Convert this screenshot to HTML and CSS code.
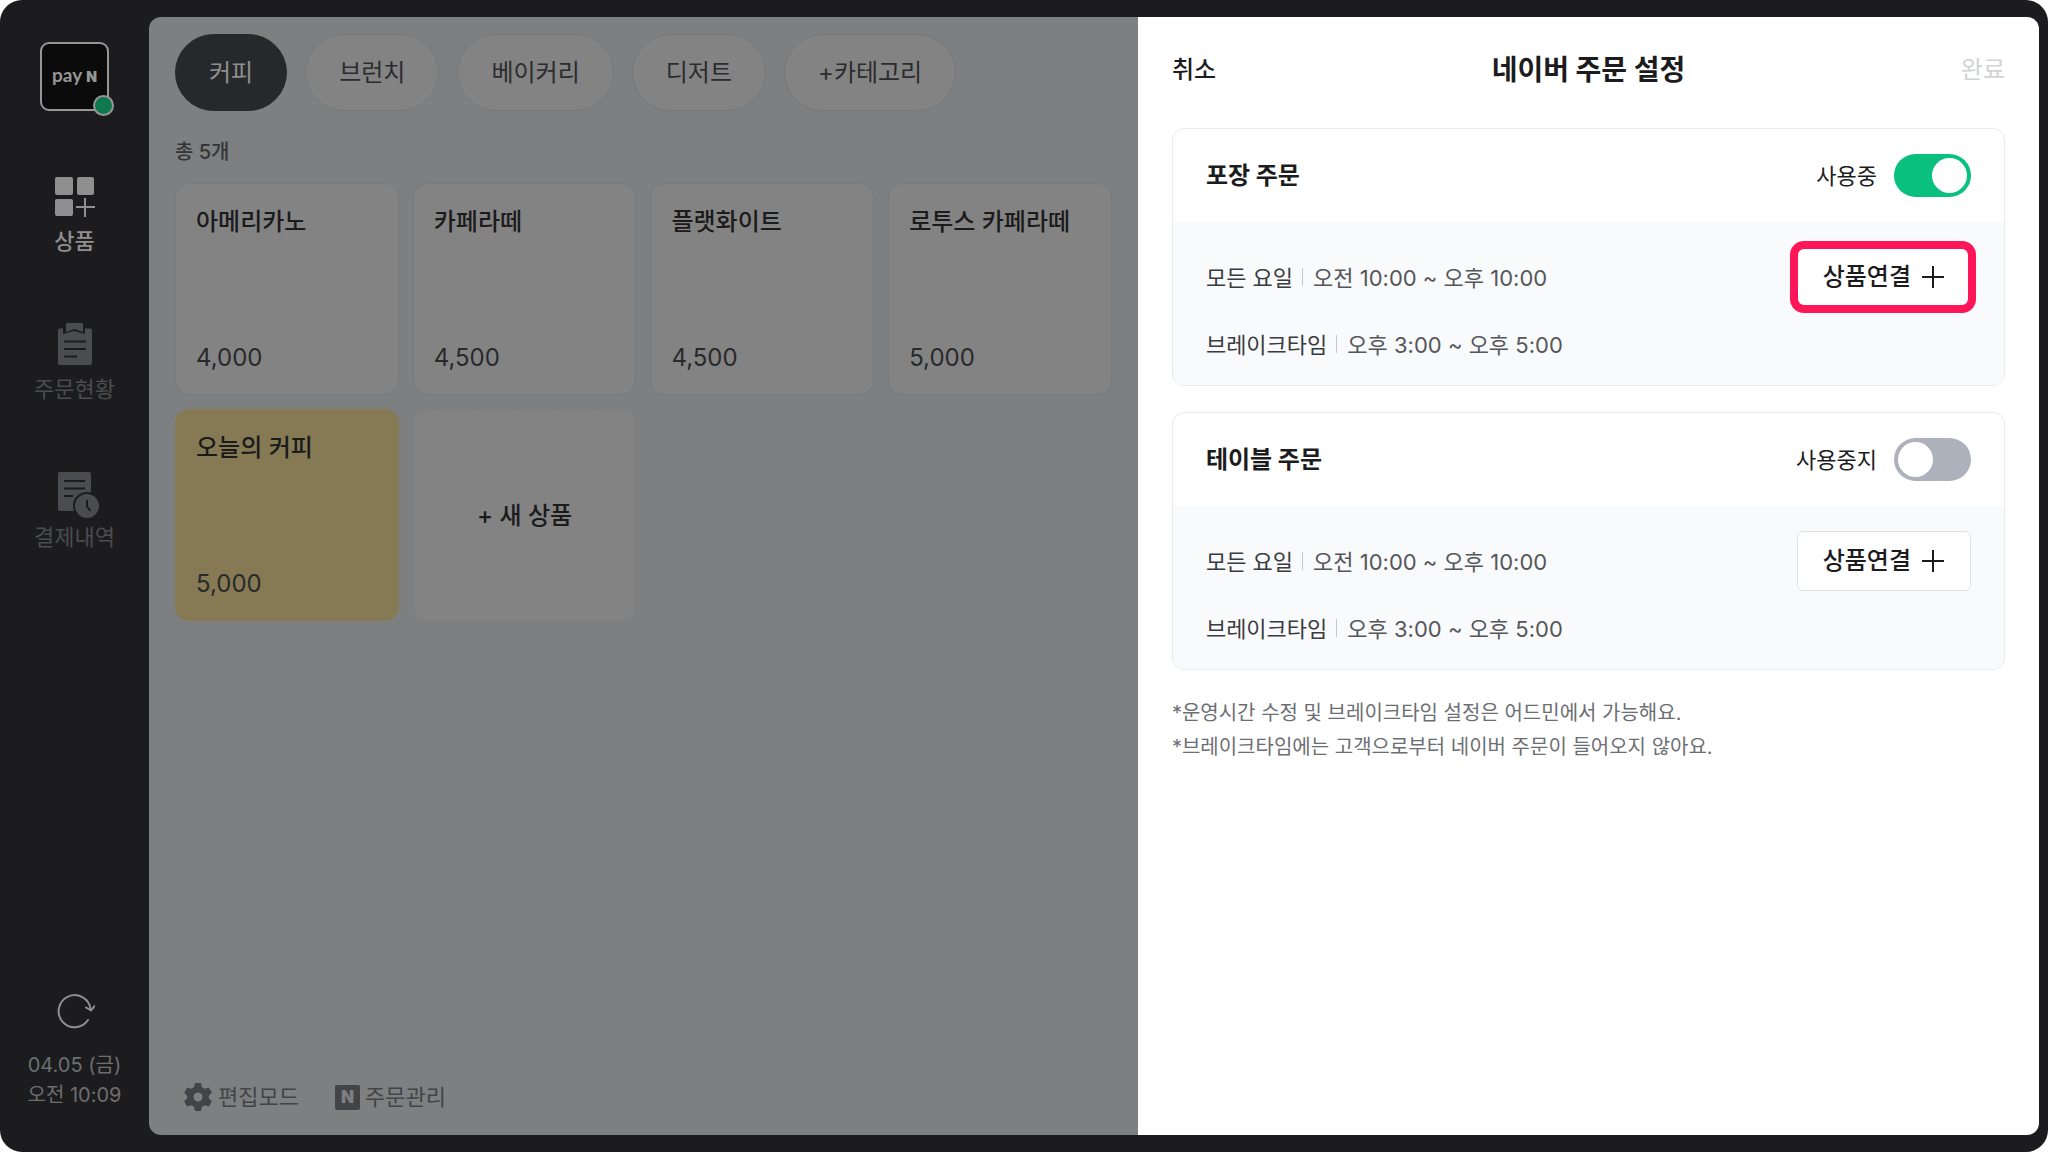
FILE: index.html
```html
<!DOCTYPE html>
<html lang="ko">
<head>
  <meta charset="UTF-8">
  <title>네이버 주문 설정</title>
  <link rel="stylesheet" href="styles.css">
</head>
<body>
  <div class="device">
    <aside class="sidebar">
      <div class="logo">
        <span class="logo-pay">pay</span><span class="logo-n">N</span>
        <span class="logo-status"></span>
      </div>

      <nav class="menu">
        <a class="menu-item active" href="#">
          <svg width="44" height="44" viewBox="0 0 44 44">
            <g fill="currentColor">
              <rect x="2" y="2" width="18" height="18" rx="2"/>
              <rect x="24" y="2" width="17" height="18" rx="2"/>
              <rect x="2" y="24" width="18" height="17" rx="2"/>
            </g>
            <path d="M32 23v19M23 32h19" stroke="currentColor" stroke-width="2"/>
          </svg>
          상품
        </a>
        <a class="menu-item" href="#">
          <svg width="44" height="44" viewBox="0 0 44 44">
            <path fill="currentColor" d="M7 5.500h3v5.500l11-3 11 3V5.500h5a2 2 0 0 1 2 2V40a2 2 0 0 1-2 2H7a2 2 0 0 1-2-2V7.500a2 2 0 0 1 2-2z"/>
            <path fill="currentColor" d="M13 1a1 1 0 0 1 1-1h15a1 1 0 0 1 1 1v8l-8.500-3L13 9z"/>
            <path d="M11 18.500h22M11 26h22M11 33.500h13" stroke="#1c1c1e" stroke-width="2"/>
          </svg>
          주문현황
        </a>
        <a class="menu-item" href="#">
          <svg width="44" height="48" viewBox="0 0 44 48" class="icon-history">
            <rect x="5" y="1" width="33" height="39" rx="2" fill="currentColor"/>
            <path d="M11 10h21M11 17.500h21M11 25h9" stroke="#1c1c1e" stroke-width="2"/>
            <circle cx="34" cy="35" r="13" fill="currentColor" stroke="#1c1c1e" stroke-width="2"/>
            <path d="M34 29v6.500l3.500 4.500" fill="none" stroke="#1c1c1e" stroke-width="2"/>
          </svg>
          결제내역
        </a>
      </nav>

      <button type="button" class="refresh" aria-label="새로고침">
        <svg width="40" height="40" viewBox="0 0 40 40" fill="none" stroke="currentColor" stroke-width="2" stroke-linecap="round">
          <path d="M33 30A16 16 0 1 1 35.500 19"/>
          <path d="M31 17.500l5 3 3.500-4.500"/>
        </svg>
      </button>
      <p class="clock">04.05 (금)<br>오전 10:09</p>
    </aside>

    <main class="products">
      <div class="tabs">
        <button type="button" class="tab active">커피</button>
        <button type="button" class="tab">브런치</button>
        <button type="button" class="tab">베이커리</button>
        <button type="button" class="tab">디저트</button>
        <button type="button" class="tab">+카테고리</button>
      </div>

      <p class="count">총 5개</p>

      <div class="product-grid">
        <button type="button" class="product"><span class="name">아메리카노</span><span class="price">4,000</span></button>
        <button type="button" class="product"><span class="name">카페라떼</span><span class="price">4,500</span></button>
        <button type="button" class="product"><span class="name">플랫화이트</span><span class="price">4,500</span></button>
        <button type="button" class="product"><span class="name">로투스 카페라떼</span><span class="price">5,000</span></button>
        <button type="button" class="product yellow"><span class="name">오늘의 커피</span><span class="price">5,000</span></button>
        <button type="button" class="product add">+ 새 상품</button>
      </div>

      <div class="tools">
        <button type="button" class="tool">
          <svg width="30" height="30" viewBox="0 0 30 30">
            <path fill="currentColor" fill-rule="evenodd" d="M12 1h6l1 4.200 2.800 1.600 4.100-1.200 3 5.200-3.100 2.900v2.600l3.100 2.900-3 5.200-4.100-1.200-2.800 1.600L18 29h-6l-1-4.200-2.800-1.600-4.100 1.200-3-5.200 3.100-2.900v-2.600l-3.100-2.900 3-5.200 4.100 1.200L11 5.200zM15 10.500a4.500 4.500 0 1 0 0 9 4.500 4.500 0 0 0 0-9z"/>
          </svg>
          편집모드
        </button>
        <button type="button" class="tool">
          <span class="naver-mark">N</span>
          주문관리
        </button>
      </div>
    </main>

    <section class="panel">
      <header class="panel-header">
        <button type="button" class="cancel">취소</button>
        <h1>네이버 주문 설정</h1>
        <button type="button" class="done" disabled>완료</button>
      </header>

      <div class="order-card">
        <div class="order-head">
          <h2>포장 주문</h2>
          <label for="takeout">사용중</label>
          <input type="checkbox" class="switch" id="takeout" checked>
        </div>
        <div class="order-body">
          <ul class="hours">
            <li><span class="day">모든 요일</span><span class="time">오전 10:00 ~ 오후 10:00</span></li>
            <li><span class="day">브레이크타임</span><span class="time">오후 3:00 ~ 오후 5:00</span></li>
          </ul>
          <button type="button" class="connect highlight">
            상품연결
            <svg width="22" height="22" viewBox="0 0 22 22"><path d="M11 0v22M0 11h22" stroke="currentColor" stroke-width="2"/></svg>
          </button>
        </div>
      </div>

      <div class="order-card">
        <div class="order-head">
          <h2>테이블 주문</h2>
          <label for="table">사용중지</label>
          <input type="checkbox" class="switch" id="table">
        </div>
        <div class="order-body">
          <ul class="hours">
            <li><span class="day">모든 요일</span><span class="time">오전 10:00 ~ 오후 10:00</span></li>
            <li><span class="day">브레이크타임</span><span class="time">오후 3:00 ~ 오후 5:00</span></li>
          </ul>
          <button type="button" class="connect">
            상품연결
            <svg width="22" height="22" viewBox="0 0 22 22"><path d="M11 0v22M0 11h22" stroke="currentColor" stroke-width="2"/></svg>
          </button>
        </div>
      </div>

      <p class="notes">*운영시간 수정 및 브레이크타임 설정은 어드민에서 가능해요.<br>*브레이크타임에는 고객으로부터 네이버 주문이 들어오지 않아요.</p>
    </section>
  </div>
</body>
</html>
```

FILE: styles.css
```css
* {
  box-sizing: border-box;
}

body {
  margin: 0;
  background: #fff;
  font-family: Inter, "Noto Sans CJK KR", sans-serif;
  line-height: 32px;
  color: #1c1c1e;
}

h1,
h2,
p,
ul {
  margin: 0;
  padding: 0;
}

button {
  margin: 0;
  padding: 0;
  border: none;
  background: none;
  font: inherit;
  color: inherit;
  cursor: pointer;
}

.device {
  display: grid;
  grid-template-columns: 149px minmax(0, 1fr) 44vw;
  min-height: 100vh;
  padding: 17px 9px 17px 0;
  border-radius: 22px;
  background: #1c1c1e;
}

/* sidebar */

.sidebar {
  display: flex;
  flex-direction: column;
  align-items: center;
  padding: 25px 0;
}

.logo {
  position: relative;
  display: flex;
  align-items: baseline;
  justify-content: center;
  gap: 4px;
  width: 69px;
  height: 69px;
  padding-top: 21px;
  border: 2px solid #969696;
  border-radius: 9px;
  background: #0b0b0b;
  color: #969696;
  line-height: 20px;
}

.logo-pay {
  font-family: Lato, sans-serif;
  font-size: 19px;
  font-weight: 700;
}

.logo-n {
  font-size: 14px;
  font-weight: 900;
}

.logo-status {
  position: absolute;
  right: -7px;
  bottom: -7px;
  width: 21px;
  height: 21px;
  border: 2px solid #969696;
  border-radius: 50%;
  background: #10784f;
}

.menu {
  display: flex;
  flex-direction: column;
  gap: 67px;
  margin-top: 64px;
}

.menu-item {
  display: flex;
  flex-direction: column;
  align-items: center;
  gap: 7px;
  color: #4a4c4f;
  font-size: 22px;
  line-height: 30px;
  text-decoration: none;
}

.menu-item.active {
  color: #8f8f8f;
  font-weight: 500;
}

.icon-history {
  margin-bottom: -4px;
  overflow: visible;
}

.refresh {
  height: 40px;
  margin-top: auto;
  color: #8f8f8f;
}

.refresh svg {
  display: block;
}

.clock {
  margin-top: 20px;
  color: #6d6e70;
  font-size: 20px;
  line-height: 30px;
  text-align: center;
}

/* product list */

.products {
  display: flex;
  flex-direction: column;
  padding: 17px 26px 22px;
  border-radius: 12px 0 0 12px;
  background: #7d7f81;
}

.tabs {
  display: flex;
  gap: 18px;
}

.tab {
  height: 77px;
  padding: 0 33px;
  border: 1px solid #767879;
  border-radius: 39px;
  background: #838383;
  color: #2c2c2e;
  font-size: 24px;
}

.tab.active {
  border-color: #27282b;
  background: #27282b;
  color: #8f8f8f;
}

.count {
  margin: 27px 0 17px;
  color: #343537;
  font-size: 20px;
  font-weight: 500;
  line-height: 28px;
}

.product-grid {
  display: grid;
  grid-template-columns: repeat(4, 1fr);
  gap: 14px;
}

.product {
  display: flex;
  flex-direction: column;
  justify-content: space-between;
  height: 212px;
  padding: 22px 20px 20px;
  border: 1px solid #777a7b;
  border-radius: 14px;
  background: #838383;
  color: #1b1b1c;
  font-size: 24px;
  text-align: left;
}

.product .name {
  font-weight: 500;
}

.product .price {
  color: #29292b;
}

.product.yellow {
  border-color: #857a54;
  background: #857a54;
}

.product.add {
  align-items: center;
  justify-content: center;
  border: 1px dashed #7b7d7e;
  font-weight: 500;
}

.tools {
  display: flex;
  gap: 36px;
  margin-top: auto;
  padding-left: 8px;
}

.tool {
  display: flex;
  align-items: center;
  gap: 5px;
  color: #434447;
  font-size: 22px;
}

.naver-mark {
  width: 25px;
  height: 25px;
  border-radius: 2px;
  background: #434447;
  color: #7d7f81;
  font-size: 17px;
  font-weight: 900;
  line-height: 25px;
  text-align: center;
}

/* order settings panel */

.panel {
  padding: 0 34px;
  border-radius: 0 12px 12px 0;
  background: #fff;
}

.panel-header {
  display: grid;
  grid-template-columns: 1fr auto 1fr;
  align-items: center;
  height: 105px;
  margin-bottom: 6px;
  font-size: 24px;
}

.panel-header h1 {
  font-size: 28px;
  font-weight: 700;
}

.cancel {
  justify-self: start;
  font-weight: 500;
}

.done {
  justify-self: end;
  color: #d0d2d4;
}

.order-card {
  margin-bottom: 26px;
  border: 1px solid #e9eaec;
  border-radius: 12px;
  overflow: hidden;
}

.order-head {
  display: flex;
  align-items: center;
  height: 93px;
  padding: 0 33px;
}

.order-head h2 {
  margin-right: auto;
  font-size: 24px;
  font-weight: 700;
}

.order-head label {
  margin-right: 17px;
  font-size: 22px;
}

.switch {
  appearance: none;
  width: 77px;
  height: 43px;
  margin: 0;
  padding: 4px;
  border-radius: 22px;
  background: #adb1bb;
  cursor: pointer;
}

.switch::before {
  content: "";
  display: block;
  width: 35px;
  height: 35px;
  border-radius: 50%;
  background: #fff;
}

.switch:checked {
  background: #0ac07f;
}

.switch:checked::before {
  margin-left: auto;
}

.order-body {
  display: flex;
  align-items: flex-start;
  justify-content: space-between;
  padding: 25px 33px;
  background: #f9fafc;
}

.hours {
  display: flex;
  flex-direction: column;
  gap: 37px;
  padding-top: 16px;
  list-style: none;
  font-size: 22px;
  line-height: 30px;
}

.hours li {
  display: flex;
  align-items: center;
}

.day {
  color: #3a3b3e;
}

.time {
  color: #55565a;
}

.time::before {
  content: "";
  display: inline-block;
  width: 1px;
  height: 18px;
  margin: 0 10px 0 9px;
  background: #c6c8cc;
}

.connect {
  position: relative;
  display: flex;
  align-items: center;
  gap: 11px;
  height: 60px;
  padding: 0 26px 0 25px;
  border: 1px solid #dfe1e4;
  border-radius: 6px;
  background: #fff;
  font-size: 24px;
  font-weight: 500;
}

.connect.highlight::after {
  content: "";
  position: absolute;
  inset: -7px -6px -7px -8px;
  border: 8px solid #ff1659;
  border-radius: 14px;
}

.notes {
  color: #6c6e72;
  font-size: 20px;
  line-height: 34px;
}
```
